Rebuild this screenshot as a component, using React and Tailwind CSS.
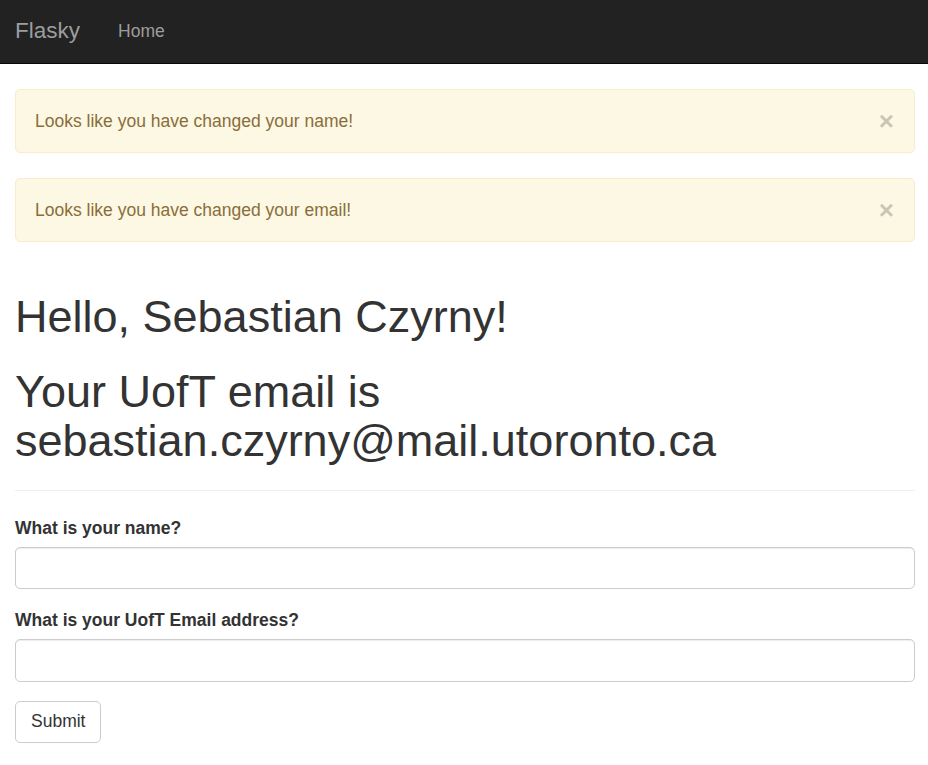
const alerts = [
  "Looks like you have changed your name!",
  "Looks like you have changed your email!",
];

const fields = [
  { id: "name", label: "What is your name?" },
  { id: "email", label: "What is your UofT Email address?" },
];

export default function App() {
  return (
    <div className="min-h-[765px] bg-white font-['Liberation_Sans',Arial,sans-serif] text-[#333]">
      {/* Navbar */}
      <nav className="flex h-[64px] items-center border-b border-[#080808] bg-[#222] pl-[15px]">
        <a className="text-[22.5px] leading-none text-[#9d9d9d]">Flasky</a>
        <a className="ml-[38px] mt-[1px] text-[17.5px] leading-none text-[#9d9d9d]">Home</a>
      </nav>

      <div className="pl-[15px] pr-[13px]">
        {/* Flash messages */}
        {alerts.map((msg) => (
          <div
            key={msg}
            className="mt-[25px] flex h-[64px] items-center justify-between rounded-[5px] border border-[#faebcc] bg-[#fcf8e3] pl-[19px] pr-[20px] text-[17.5px] leading-[25px] text-[#8a6d3b]"
          >
            <span>{msg}</span>
            <button
              type="button"
              className="text-[26px] font-bold leading-none text-black opacity-20"
            >
              ×
            </button>
          </div>
        ))}

        {/* Page header */}
        <div className="mt-[50px] border-b border-[#eee] pb-[24px]">
          <h1 className="text-[45px] leading-[49.5px]">Hello, Sebastian Czyrny!</h1>
          <h1 className="mt-[25px] text-[45px] leading-[49.5px]">
            Your UofT email is
            <br />
            sebastian.czyrny@mail.utoronto.ca
          </h1>
        </div>

        {/* Form */}
        <form className="mt-[25px]">
          {fields.map((f) => (
            <div key={f.id} className="mb-[19px]">
              <label
                htmlFor={f.id}
                className="block text-[17.5px] font-bold leading-[25px]"
              >
                {f.label}
              </label>
              <input
                id={f.id}
                type="text"
                className="mt-[6px] block h-[42.5px] w-full rounded-[5px] border border-[#ccc] px-[15px] text-[17.5px] shadow-[inset_0_1px_1px_rgba(0,0,0,0.075)] outline-none"
              />
            </div>
          ))}
          <button
            type="submit"
            className="h-[42px] rounded-[5px] border border-[#ccc] bg-white px-[15px] text-[17.5px] leading-[25px] text-[#333]"
          >
            Submit
          </button>
        </form>
      </div>
    </div>
  );
}
